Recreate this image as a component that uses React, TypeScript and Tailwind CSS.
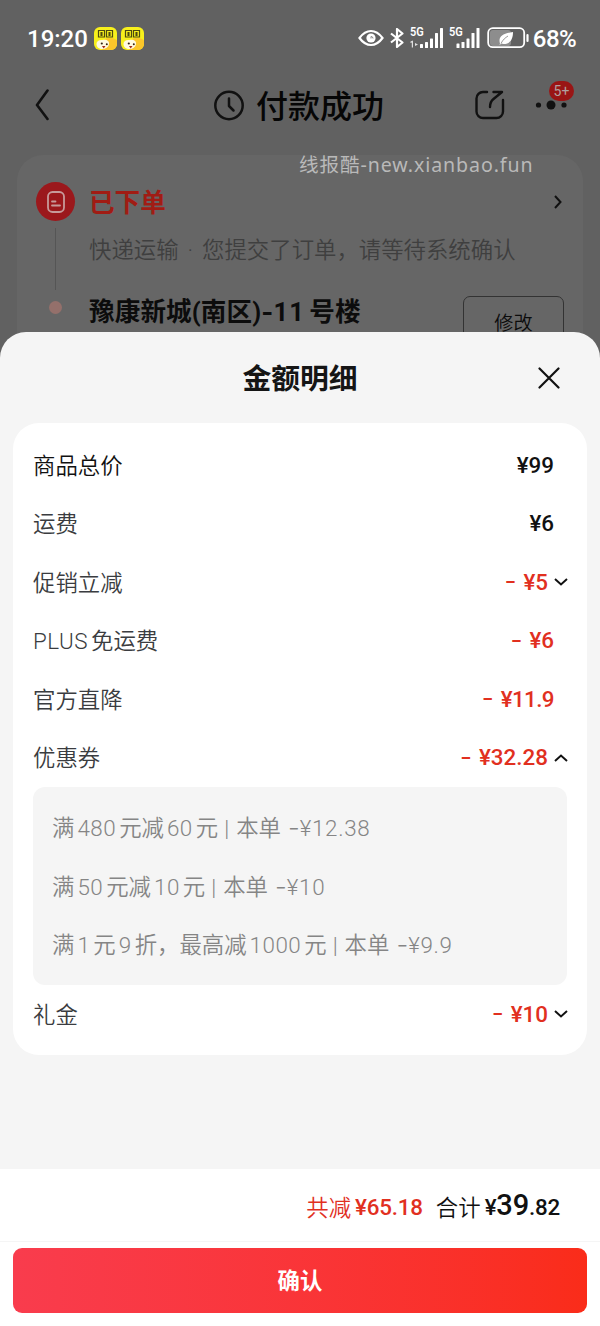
import { Fragment, useState } from "react";
import clsx from "clsx";

interface AmountItem {
  label: string;
  amount: string;
  minus?: boolean;
  strong?: boolean;
  tight?: boolean;
  toggle?: boolean;
  details?: { rule: string; saved: string }[];
}

const ITEMS: AmountItem[] = [
  { label: "商品总价", amount: "¥99", strong: true },
  { label: "运费", amount: "¥6" },
  { label: "促销立减", amount: "¥5", minus: true, toggle: true },
  { label: "PLUS免运费", amount: "¥6", minus: true },
  { label: "官方直降", amount: "¥11.9", minus: true, tight: true },
  {
    label: "优惠券",
    amount: "¥32.28",
    minus: true,
    toggle: true,
    details: [
      { rule: "满480元减60元", saved: "¥12.38" },
      { rule: "满50元减10元", saved: "¥10" },
      { rule: "满1元9折，最高减1000元", saved: "¥9.9" },
    ],
  },
  { label: "礼金", amount: "¥10", minus: true, toggle: true },
];

// Adds a thin gap between Chinese and latin/digit runs.
function Spaced({ text }: { text: string }) {
  const parts = text.split(/([A-Za-z0-9.]+)/).filter(Boolean);
  return (
    <>
      {parts.map((part, i) =>
        /^[A-Za-z0-9]/.test(part) ? (
          <span key={i} className={clsx("tracking-[0.5px]", i === 0 ? "mr-[3px]" : "mx-[3px]")}>
            {part}
          </span>
        ) : (
          <Fragment key={i}>{part}</Fragment>
        ),
      )}
    </>
  );
}

function Chevron({ up }: { up?: boolean }) {
  return (
    <svg viewBox="0 0 14 8" className="h-2 w-3.5" fill="none" stroke="#111" strokeWidth="2">
      <path d={up ? "M1 7 7 1.6 13 7" : "M1 1 7 6.4 13 1"} />
    </svg>
  );
}

function StickerIcon() {
  return (
    <svg viewBox="0 0 23 23" className="h-[23px] w-[23px]">
      <rect width="23" height="23" rx="6" fill="#f8f01c" />
      <path d="M10 13C14 9.5 20 10.5 23 13.5V17a6 6 0 0 1-6 6H8Z" fill="#fbc62a" />
      <path d="M2.500 17c0-3 3-4.500 6-4 4-1 7 1 6.500 4C14.500 20.500 11.500 22 8.500 22 5 22 2.500 20 2.500 17Z" fill="#fffbe2" />
      <path
        d="M4.5 3.500h6v6.500h-6zM12.5 3.500h6v6.500h-6zM6 6h3M7.5 5v4M6 8h3M14 6h3M15.5 5v4M14 8h3"
        fill="none"
        stroke="#4c4a10"
        strokeWidth="1.2"
      />
      <circle cx="7.8" cy="16.5" r="1.1" fill="#372514" />
      <circle cx="12.8" cy="17.2" r="1" fill="#372514" />
      <path d="M8 19h3.500l-1.800 2.500z" fill="#9c2718" />
    </svg>
  );
}

function Signal({ dual }: { dual?: boolean }) {
  return (
    <div className="relative h-[22px] w-[34px]">
      <span className="absolute -top-[3px] left-0 origin-left scale-x-[0.88] text-[12.5px] leading-[16px] font-semibold">
        5G
      </span>
      <svg viewBox="0 0 34 22" className="h-[22px] w-[34px]" fill="#fff">
        {dual && <path d="M3 13.500v7H1.800v-5L.5 16v-1.500zM5 16l3 1.500L5 19z" opacity=".8" />}
        {dual && <rect x="10" y="17" width="3" height="4" rx=".6" />}
        {!dual && <rect x="7.5" y="16.5" width="3" height="4.5" rx=".6" />}
        <rect x={dual ? 15 : 12.5} y="15" width="3" height="6" rx=".6" />
        <rect x={dual ? 20 : 17.5} y="11.5" width="3" height="9.5" rx=".6" />
        <rect x={dual ? 25 : 22.5} y="6" width="3" height="15" rx=".6" />
        <rect x={dual ? 30 : 27.5} y="1" width="3" height="20" rx=".6" />
      </svg>
    </div>
  );
}

function StatusBar() {
  return (
    <div className="flex h-[76px] items-center pr-6 pl-[27px] text-white">
      <span className="pt-px text-[24px] font-medium">19:20</span>
      <div className="ml-[6px] flex gap-[4px]">
        <StickerIcon />
        <StickerIcon />
      </div>
      <div className="ml-auto flex items-center">
        <svg viewBox="0 0 26 18" className="h-[18px] w-[26px]" fill="none" stroke="#fff" strokeWidth="2.2">
          <path d="M1.5 9C5 4.2 9 2 13 2s8 2.2 11.5 7C21 13.8 17 16 13 16S5 13.8 1.5 9Z" />
          <circle cx="13" cy="9" r="4.6" fill="#fff" stroke="none" />
          <path d="M13 9.500V7.500a2 2 0 0 1 2 2" stroke="#888" strokeWidth="1" />
        </svg>
        <svg
          viewBox="0 0 14 20"
          className="ml-[6px] h-5 w-3.5"
          fill="none"
          stroke="#fff"
          strokeWidth="2.2"
          strokeLinejoin="round"
        >
          <path d="M1 5.5 12.5 14.5 7 19V1l5.5 4.5L1 14.5" />
        </svg>
        <div className="ml-[6px] flex gap-[5px]">
          <Signal dual />
          <Signal />
        </div>
        <svg viewBox="0 0 42 22" className="ml-[4px] h-[22px] w-[42px]" fill="none">
          <rect x="3" y="3" width="21" height="16" rx="3" fill="#8d8d8d" />
          <rect x="1.2" y="1.2" width="36" height="19" rx="4.5" stroke="#fff" strokeWidth="1.8" />
          <path d="M40.500 8v6" stroke="#fff" strokeWidth="2.2" strokeLinecap="round" />
          <path d="M13 16.500C11 10 15 6.500 26 5c0 7-2.500 12-9.500 12-.8 0-1.500-.2-2-.4L12.500 18Z" fill="#fff" />
          <path d="M14 16.500c2-4 4-5.500 7-7.500" stroke="#999" strokeWidth="1" />
        </svg>
        <span className="ml-[4px] pt-px text-[24px] font-medium tracking-[-0.6px]">68%</span>
      </div>
    </div>
  );
}

function PageHeader() {
  return (
    <div className="flex h-[58px] items-center pl-[34px]">
      <svg
        viewBox="0 0 18 32"
        className="h-8 w-[18px]"
        fill="none"
        stroke="#111"
        strokeWidth="2.6"
        strokeLinecap="round"
        strokeLinejoin="round"
      >
        <path d="M13.5 1.5 3 16l10.5 14" />
      </svg>
      <svg
        viewBox="0 0 32 32"
        className="ml-[161px] h-8 w-8"
        fill="none"
        stroke="#111"
        strokeWidth="2.5"
        strokeLinecap="round"
        strokeLinejoin="round"
      >
        <circle cx="16" cy="16.5" r="13.7" />
        <path d="M16 9.5v7.5l4.5 4.5" />
      </svg>
      <h1 className="ml-[11px] pt-[4px] text-[32px] font-medium whitespace-nowrap text-[#060606]">付款成功</h1>
      <svg
        viewBox="0 0 30 30"
        className="ml-[91px] h-[30px] w-[30px]"
        fill="none"
        stroke="#111"
        strokeWidth="2.4"
        strokeLinecap="round"
        strokeLinejoin="round"
      >
        <path d="M12 2H8a6.5 6.5 0 0 0-6.5 6.5v13A6.5 6.5 0 0 0 8 28h13.5a6.5 6.5 0 0 0 6.500-6.500V10" />
        <path d="M18.5 2H27L18.5 9c-2.5 2-3.5 4.5-3.5 8" />
      </svg>
      <div className="relative ml-[30px]">
        <svg viewBox="0 0 32 10" className="h-2.5 w-8" fill="#111">
          <circle cx="3.5" cy="5" r="2.6" />
          <circle cx="16" cy="5" r="4.5" />
          <circle cx="29" cy="5" r="2.6" />
        </svg>
        <span className="absolute -top-[19px] left-[14px] flex h-5 w-[25px] items-center justify-center rounded-full bg-[#991515] text-[14px] text-[#b0a0a0]">
          5+
        </span>
      </div>
    </div>
  );
}

function OrderCard() {
  return (
    <div className="mx-[17px] mt-[21px] flex h-[240px] rounded-[26px] bg-[#666]">
      <div className="ml-[19px] flex w-[39px] flex-col items-center pt-[27px]">
        <div className="flex h-[39px] w-[39px] shrink-0 items-center justify-center rounded-full bg-[#9b181c]">
          <svg
            viewBox="0 0 18 22"
            className="h-[22px] w-[18px]"
            fill="none"
            stroke="#c79a9a"
            strokeWidth="1.8"
            strokeLinecap="round"
          >
            <rect x="1" y="1" width="16" height="20" rx="4.5" />
            <path d="M5 10.5h3.5M5 14.5h8" />
          </svg>
        </div>
        <div className="mt-[7px] h-[62px] w-px shrink-0 bg-[#555]" />
        <div className="mt-[11px] h-[13px] w-[13px] shrink-0 rounded-full bg-[#94706b]" />
      </div>
      <div className="ml-[14px] flex-1">
        <div className="mt-[27px] flex h-10 items-center justify-between pr-[21px]">
          <h2 className="pt-[3px] text-[25.6px] font-bold text-[#a11c14]">已下单</h2>
          <svg viewBox="0 0 8 14" className="h-3.5 w-2" fill="none" stroke="#111" strokeWidth="2">
            <path d="M1 1 6.5 7 1 13" />
          </svg>
        </div>
        <p className="mt-[11px] flex h-9 items-center text-[22.4px] font-[350] whitespace-pre text-[#3f3f3f]">
          快递运输<span className="mx-[9px]">·</span>您提交了订单，请等待系统确认
        </p>
        <div className="mt-[27px] flex pr-[19px]">
          <p className="-mt-0.5 flex h-9 items-center text-[25.6px] font-bold tracking-[0.1px] whitespace-nowrap text-[#0c0c0c]">
            豫康新城(南区)<span className="font-[Inter]">-</span>
            <span className="mr-1 tracking-[1.3px]">11</span>号楼
          </p>
          <button
            type="button"
            className="ml-auto h-[54px] w-[101px] rounded-[7px] border border-[#333] pt-[3px] text-[19.2px] font-[350] text-[#0c0c0c]"
          >
            修改
          </button>
        </div>
      </div>
    </div>
  );
}

function AmountRow({ item, open, onToggle }: { item: AmountItem; open: boolean; onToggle: () => void }) {
  return (
    <>
      <div
        className={clsx(
          "flex h-[58.5px] items-center justify-between text-[22.4px]",
          item.toggle ? "-mr-px" : "pr-[13px]",
        )}
      >
        <span className={clsx("pt-[3px] font-[350]", item.strong ? "text-[#111]" : "text-[#3a3c40]")}>
          <Spaced text={item.label} />
        </span>
        <button
          type="button"
          onClick={onToggle}
          className={clsx("flex items-center font-medium", item.minus ? "text-[#e1301f]" : "text-[#111]")}
        >
          {item.minus && (
            <span className="mr-[7px] -mt-[2px] font-[Inter] text-[26px] leading-none font-normal">-</span>
          )}
          <span className={clsx("pt-px", item.tight && "tracking-[-0.6px]")}>{item.amount}</span>
          {item.toggle && (
            <span className="ml-[6px]">
              <Chevron up={open} />
            </span>
          )}
        </button>
      </div>
      {item.details && open && (
        <ul className="rounded-xl bg-[#f5f5f5] px-[19px] py-[11.25px]">
          {item.details.map(({ rule, saved }) => (
            <li
              key={rule}
              className="flex h-[58.5px] items-center pt-[3px] text-[22.4px] font-[350] whitespace-nowrap text-[#858585]"
            >
              <span>
                <Spaced text={rule} />
              </span>
              <span className="mr-[7px] ml-[6px]">|</span>
              <span>本单</span>
              <span className="-mt-[2px] ml-[7px] font-[Inter] text-[26px] leading-none font-light">-</span>
              <span className="tracking-[0.7px]">{saved}</span>
            </li>
          ))}
        </ul>
      )}
    </>
  );
}

function AmountSheet() {
  const [openLabel, setOpenLabel] = useState("优惠券");

  return (
    <section className="relative flex flex-1 flex-col overflow-hidden rounded-t-[26px] bg-[#f5f5f5]">
      <div className="relative flex h-[91px] items-center justify-center">
        <h2 className="pt-[4px] text-[28.8px] font-bold text-[#151515]">金额明细</h2>
        <button type="button" aria-label="关闭" className="absolute top-[35px] right-10">
          <svg
            viewBox="0 0 22 22"
            className="h-[22px] w-[22px]"
            fill="none"
            stroke="#111"
            strokeWidth="2.2"
            strokeLinecap="round"
          >
            <path d="M1.5 1.5 20.5 20.5M20.5 1.5 1.5 20.5" />
          </svg>
        </button>
      </div>

      <div className="mx-[13px] rounded-[26px] bg-white px-5 pt-[13px] pb-[11.5px]">
        {ITEMS.map((item) => (
          <AmountRow
            key={item.label}
            item={item}
            open={openLabel === item.label}
            onToggle={() => item.toggle && setOpenLabel(openLabel === item.label ? "" : item.label)}
          />
        ))}
      </div>

      <footer className="mt-auto bg-white">
        <div className="flex h-[73px] items-center justify-end border-b border-[#f5f5f5] pt-[6px] pr-10 text-[22.4px]">
          <span className="pt-[2px] font-[350] text-[#e1301f]">共减</span>
          <span className="ml-[4px] font-medium tracking-[-0.2px] text-[#e1301f]">¥65.18</span>
          <span className="ml-[13px] pt-[2px] font-[350] text-[#111]">合计</span>
          <span className="ml-1 flex items-baseline font-medium tracking-[-0.2px] text-[#111]">
            ¥<span className="text-[29px] leading-none">39</span>.82
          </span>
        </div>
        <div className="px-[13px] pt-[6px] pb-[13px]">
          <button
            type="button"
            className="h-[65px] w-full rounded-[9px] bg-linear-to-r from-[#f93c4d] to-[#fa2c19] pt-[2px] text-[22.4px] font-bold text-white"
          >
            确认
          </button>
        </div>
      </footer>
    </section>
  );
}

export default function App() {
  return (
    <div className="relative flex h-[1326px] w-[600px] flex-col overflow-hidden bg-[#616161] font-[Roboto,'Noto_Sans_CJK_SC',sans-serif]">
      <div className="-mb-7 h-[360px] shrink-0 overflow-hidden">
        <StatusBar />
        <PageHeader />
        <OrderCard />
      </div>
      <AmountSheet />
      <span className="absolute top-[150px] left-[299px] font-['Noto_Sans','Noto_Sans_CJK_SC',sans-serif] text-[19.6px] tracking-[0.9px] whitespace-nowrap text-[#b9b9b9]">
        线报酷-new.xianbao.fun
      </span>
    </div>
  );
}
